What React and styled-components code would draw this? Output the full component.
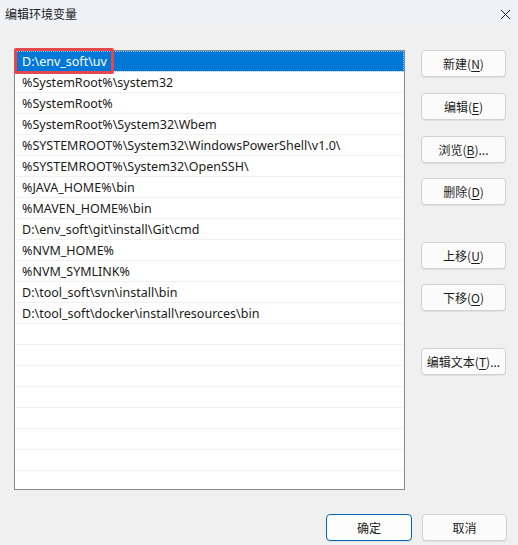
import React from "react";
import styled, { createGlobalStyle } from "styled-components";

const Global = createGlobalStyle`
  html, body { margin: 0; padding: 0; background: #f0f0f0; }
  body {
    font-family: "Noto Sans", "Noto Sans CJK SC", sans-serif;
    font-size: 12px;
    color: #1a1a1a;
  }
`;

const Window = styled.div`
  width: 518px;
  height: 545px;
  display: flex;
  flex-direction: column;
  background: #f0f0f0;
  overflow: hidden;
`;

const TitleBar = styled.div`
  height: 28px;
  display: flex;
  align-items: center;
  justify-content: space-between;
  padding: 0 7px 2px 5px;
  background: linear-gradient(#eef2f8 0, #eef2f8 22px, #f0f0f0 28px);
  box-sizing: border-box;
`;

const Title = styled.span`
  font-family: "Noto Sans CJK SC", sans-serif;
  font-size: 12px;
  color: #1b1b1b;
`;

const Close = styled.svg`
  width: 11px;
  height: 11px;
  margin-top: 3px;
`;

const Body = styled.div`
  display: flex;
  padding: 22px 12px 0 14px;
  gap: 16px;
`;

const ListWrap = styled.div`
  position: relative;
`;

const ListBox = styled.div`
  width: 391px;
  height: 440px;
  box-sizing: border-box;
  border: 1px solid #858a91;
  background: #fff;
  overflow: hidden;
`;

const Row = styled.div`
  height: 21px;
  box-sizing: border-box;
  padding-left: 7px;
  display: flex;
  align-items: center;
  white-space: nowrap;
  border-bottom: 1px solid #f1f1f1;
  font-family: "Noto Sans", "Noto Sans CJK SC", sans-serif;
  font-size: 12.5px;
  background: ${(p) => (p.$selected ? "#0078d7" : "transparent")};
  color: ${(p) => (p.$selected ? "#fff" : "#1a1a1a")};
  outline: ${(p) => (p.$selected ? "1px dotted #9cc8ee" : "none")};
  outline-offset: -1px;
`;

/* red annotation frame drawn over the first entry */
const Highlight = styled.div`
  position: absolute;
  left: 0;
  top: -2px;
  width: 100px;
  height: 26px;
  box-sizing: border-box;
  border: 3px solid #e5474f;
  border-radius: 2px;
  pointer-events: none;
`;

const Side = styled.div`
  display: flex;
  flex-direction: column;
`;

const Button = styled.button`
  width: ${(p) => p.$w || 85}px;
  height: 27px;
  margin-top: ${(p) => p.$gap || 0}px;
  box-sizing: border-box;
  border: 1px solid ${(p) => (p.$primary ? "#0067c0" : "#d1d1d1")};
  border-radius: 4px;
  background: ${(p) => (p.$primary ? "#fdfdfd" : "#fbfbfb")};
  font-family: "Noto Sans CJK SC", sans-serif;
  font-size: 12px;
  color: #1b1b1b;
  padding: 0;
  display: flex;
  align-items: center;
  justify-content: center;
  box-shadow: 0 1px 0 rgba(0, 0, 0, 0.06);
`;

const Key = styled.span`
  text-decoration: underline;
  text-underline-offset: 2px;
`;

const Footer = styled.div`
  display: flex;
  justify-content: flex-end;
  gap: 10px;
  padding: 24px 11px 0 0;
`;

const paths = [
  "D:\\env_soft\\uv",
  "%SystemRoot%\\system32",
  "%SystemRoot%",
  "%SystemRoot%\\System32\\Wbem",
  "%SYSTEMROOT%\\System32\\WindowsPowerShell\\v1.0\\",
  "%SYSTEMROOT%\\System32\\OpenSSH\\",
  "%JAVA_HOME%\\bin",
  "%MAVEN_HOME%\\bin",
  "D:\\env_soft\\git\\install\\Git\\cmd",
  "%NVM_HOME%",
  "%NVM_SYMLINK%",
  "D:\\tool_soft\\svn\\install\\bin",
  "D:\\tool_soft\\docker\\install\\resources\\bin",
];

const rows = [...paths, ...Array(21 - paths.length).fill("")];

const sideButtons = [
  { label: "新建", key: "N", gap: 0 },
  { label: "编辑", key: "E", gap: 16 },
  { label: "浏览", key: "B", gap: 16, more: true },
  { label: "删除", key: "D", gap: 15 },
  { label: "上移", key: "U", gap: 37 },
  { label: "下移", key: "O", gap: 15 },
  { label: "编辑文本", key: "T", gap: 37, more: true },
];

export default function App() {
  return (
    <Window>
      <Global />
      <TitleBar>
        <Title>编辑环境变量</Title>
        <Close viewBox="0 0 11 11">
          <path d="M1 1 L10 10 M10 1 L1 10" stroke="#1b1b1b" strokeWidth="1" fill="none" />
        </Close>
      </TitleBar>
      <Body>
        <ListWrap>
          <ListBox>
            {rows.map((p, i) => (
              <Row key={i} $selected={i === 0}>
                {p}
              </Row>
            ))}
          </ListBox>
          <Highlight />
        </ListWrap>
        <Side>
          {sideButtons.map((b) => (
            <Button key={b.key} $gap={b.gap}>
              {b.label}(<Key>{b.key}</Key>){b.more ? "..." : ""}
            </Button>
          ))}
        </Side>
      </Body>
      <Footer>
        <Button $primary $w={86}>确定</Button>
        <Button>取消</Button>
      </Footer>
    </Window>
  );
}
